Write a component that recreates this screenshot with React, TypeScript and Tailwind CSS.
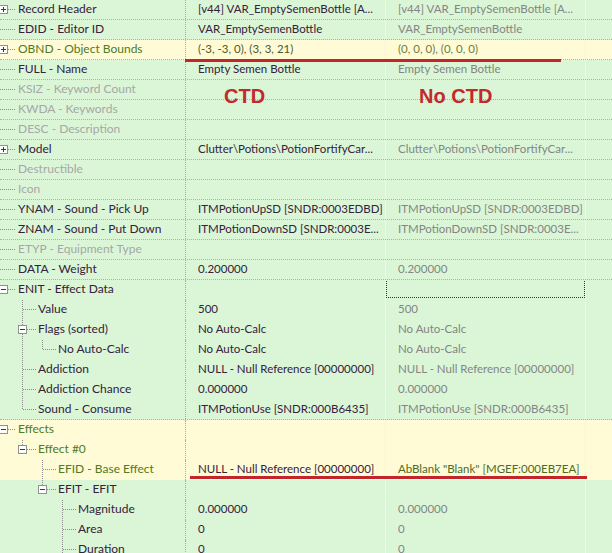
import React from "react";

type Row = {
  level: number;
  exp?: "+" | "-";
  cont?: boolean[];
  hasNext?: boolean;
  label: string;
  tone?: "dark" | "dis" | "green";
  v1?: string;
  v2?: string;
  v1tone?: "dark" | "olive";
  v2tone?: "grey" | "olive" | "green";
  yellow?: boolean;
  sep?: boolean;
  focus?: boolean;
};

const rows: Row[] = [
  { level: 0, exp: "+", label: "Record Header", v1: "[v44] VAR_EmptySemenBottle [A...", v2: "[v44] VAR_EmptySemenBottle [A...", sep: true },
  { level: 0, label: "EDID - Editor ID", v1: "VAR_EmptySemenBottle", v2: "VAR_EmptySemenBottle", sep: true },
  { level: 0, exp: "+", label: "OBND - Object Bounds", tone: "green", v1: "(-3, -3, 0), (3, 3, 21)", v1tone: "olive", v2: "(0, 0, 0), (0, 0, 0)", v2tone: "olive", yellow: true, sep: true },
  { level: 0, label: "FULL - Name", v1: "Empty Semen Bottle", v2: "Empty Semen Bottle", sep: true },
  { level: 0, label: "KSIZ - Keyword Count", tone: "dis", sep: true },
  { level: 0, label: "KWDA - Keywords", tone: "dis", sep: true },
  { level: 0, label: "DESC - Description", tone: "dis", sep: true },
  { level: 0, exp: "+", label: "Model", v1: "Clutter\\Potions\\PotionFortifyCar...", v2: "Clutter\\Potions\\PotionFortifyCar...", sep: true },
  { level: 0, label: "Destructible", tone: "dis", sep: true },
  { level: 0, label: "Icon", tone: "dis", sep: true },
  { level: 0, label: "YNAM - Sound - Pick Up", v1: "ITMPotionUpSD [SNDR:0003EDBD]", v2: "ITMPotionUpSD [SNDR:0003EDBD]", sep: true },
  { level: 0, label: "ZNAM - Sound - Put Down", v1: "ITMPotionDownSD [SNDR:0003E...", v2: "ITMPotionDownSD [SNDR:0003E...", sep: true },
  { level: 0, label: "ETYP - Equipment Type", tone: "dis", sep: true },
  { level: 0, label: "DATA - Weight", v1: "0.200000", v2: "0.200000", sep: true },
  { level: 0, exp: "-", label: "ENIT - Effect Data", focus: true },
  { level: 1, hasNext: true, label: "Value", v1: "500", v2: "500" },
  { level: 1, exp: "-", hasNext: true, label: "Flags (sorted)", v1: "No Auto-Calc", v2: "No Auto-Calc" },
  { level: 2, cont: [false, true], label: "No Auto-Calc", v1: "No Auto-Calc", v2: "No Auto-Calc" },
  { level: 1, hasNext: true, label: "Addiction", v1: "NULL - Null Reference [00000000]", v2: "NULL - Null Reference [00000000]" },
  { level: 1, hasNext: true, label: "Addiction Chance", v1: "0.000000", v2: "0.000000" },
  { level: 1, label: "Sound - Consume", v1: "ITMPotionUse [SNDR:000B6435]", v2: "ITMPotionUse [SNDR:000B6435]", sep: true },
  { level: 0, exp: "-", label: "Effects", tone: "green", yellow: true },
  { level: 1, exp: "-", label: "Effect #0", tone: "green", yellow: true },
  { level: 2, hasNext: true, label: "EFID - Base Effect", tone: "green", yellow: true, v1: "NULL - Null Reference [00000000]", v2: "AbBlank \"Blank\" [MGEF:000EB7EA]", v2tone: "green" },
  { level: 2, exp: "-", label: "EFIT - EFIT" },
  { level: 3, hasNext: true, label: "Magnitude", v1: "0.000000", v2: "0.000000" },
  { level: 3, hasNext: true, label: "Area", v1: "0", v2: "0" },
  { level: 3, hasNext: true, label: "Duration", v1: "0", v2: "0" },
];

const cx = (k: number) => (k === 0 ? 3 : 2 + 20 * k);
const DOT = "#8c8c8c";

function Gutter({ r }: { r: Row }) {
  const L = r.level;
  const w = 18 + 20 * L;
  const c = cx(L);
  const els: React.ReactNode[] = [];
  const cont = r.cont || [];
  for (let k = 1; k < L; k++) {
    if (cont[k]) {
      els.push(<line key={"a" + k} x1={cx(k) + 0.5} y1={0} x2={cx(k) + 0.5} y2={20} stroke={DOT} strokeDasharray="1 1" />);
    }
  }
  if (L >= 1) {
    els.push(<line key="v1" x1={c + 0.5} y1={0} x2={c + 0.5} y2={r.exp ? 5 : 10} stroke={DOT} strokeDasharray="1 1" />);
    if (r.hasNext) {
      els.push(<line key="v2" x1={c + 0.5} y1={r.exp ? 14 : 10} x2={c + 0.5} y2={20} stroke={DOT} strokeDasharray="1 1" />);
    }
  }
  const hx1 = r.exp ? c + 5 : L === 0 ? 0 : c + 1;
  els.push(<line key="h" x1={hx1} y1={9.5} x2={16 + 20 * L} y2={9.5} stroke={DOT} strokeDasharray="1 1" />);
  if (r.exp) {
    els.push(<rect key="b" x={c - 4 + 0.5} y={5.5} width={8} height={8} fill="#ffffff" stroke="#919191" />);
    els.push(<line key="m" x1={c - 2} y1={9.5} x2={c + 3} y2={9.5} stroke="#3a3a3a" />);
    if (r.exp === "+") {
      els.push(<line key="p" x1={c + 0.5} y1={7} x2={c + 0.5} y2={12} stroke="#3a3a3a" />);
    }
  }
  return (
    <svg width={w} height={20} className="shrink-0" shapeRendering="crispEdges">
      {els}
    </svg>
  );
}

function labelColor(t?: Row["tone"]) {
  if (t === "dis") return "text-[#a7a7a7]";
  if (t === "green") return "text-[#4f7a22]";
  return "text-[#36203c]";
}

function v1Color(t?: Row["v1tone"]) {
  if (t === "olive") return "text-[#52591f]";
  return "text-[#36203c]";
}

function v2Color(t?: Row["v2tone"]) {
  if (t === "olive") return "text-[#727c3c]";
  if (t === "green") return "text-[#4d6b1f]";
  return "text-[#858585]";
}

function TreeRow({ r }: { r: Row }) {
  const bg = r.yellow ? "bg-[#fffbd7]" : "bg-[#daf6d7]";
  const sep = r.sep ? "border-b border-dotted border-[#a9b3a8]" : "";
  return (
    <div className={`flex h-[20px] shrink-0 ${bg} ${sep}`}>
      <div className="flex w-[186px] shrink-0 items-start overflow-hidden border-r border-dotted border-[#a4aea3]">
        <Gutter r={r} />
        <span className={`whitespace-nowrap text-[12px] leading-[18px] ${labelColor(r.tone)}`}>{r.label}</span>
      </div>
      <div className="w-[200px] shrink-0 overflow-hidden whitespace-nowrap border-r border-[#e9fbe6] pl-[12px] text-[11.5px] leading-[18px]">
        <span className={v1Color(r.v1tone)}>{r.v1 ?? ""}</span>
      </div>
      <div className="w-[200px] shrink-0 overflow-hidden whitespace-nowrap border-r border-[#e9fbe6] text-[11.5px] leading-[18px]">
        {r.focus ? (
          <div className="-mt-[1px] h-[19px] border border-dotted border-[#333333]" />
        ) : (
          <span className={`pl-[12px] ${v2Color(r.v2tone)}`}>{r.v2 ?? ""}</span>
        )}
      </div>
      <div className="flex-1" />
    </div>
  );
}

export default function App() {
  return (
    <div className="relative h-[553px] w-[612px] overflow-hidden bg-[#daf6d7] font-['Lato','Segoe_UI',sans-serif] text-[12px]">
      <div className="flex flex-col">
        {rows.map((r, i) => (
          <TreeRow key={i} r={r} />
        ))}
      </div>
      <div className="absolute left-[185px] top-[59px] h-[3px] w-[376px] bg-[#c2262b]" />
      <div className="absolute left-[190px] top-[476px] h-[3px] w-[397px] bg-[#c2262b]" />
      <div className="absolute left-[224px] top-[86px] font-['Liberation_Sans',Arial,sans-serif] text-[20px] font-bold leading-none text-[#c3282d]">
        CTD
      </div>
      <div className="absolute left-[419px] top-[86px] font-['Liberation_Sans',Arial,sans-serif] text-[20px] font-bold leading-none text-[#c3282d]">
        No CTD
      </div>
    </div>
  );
}
